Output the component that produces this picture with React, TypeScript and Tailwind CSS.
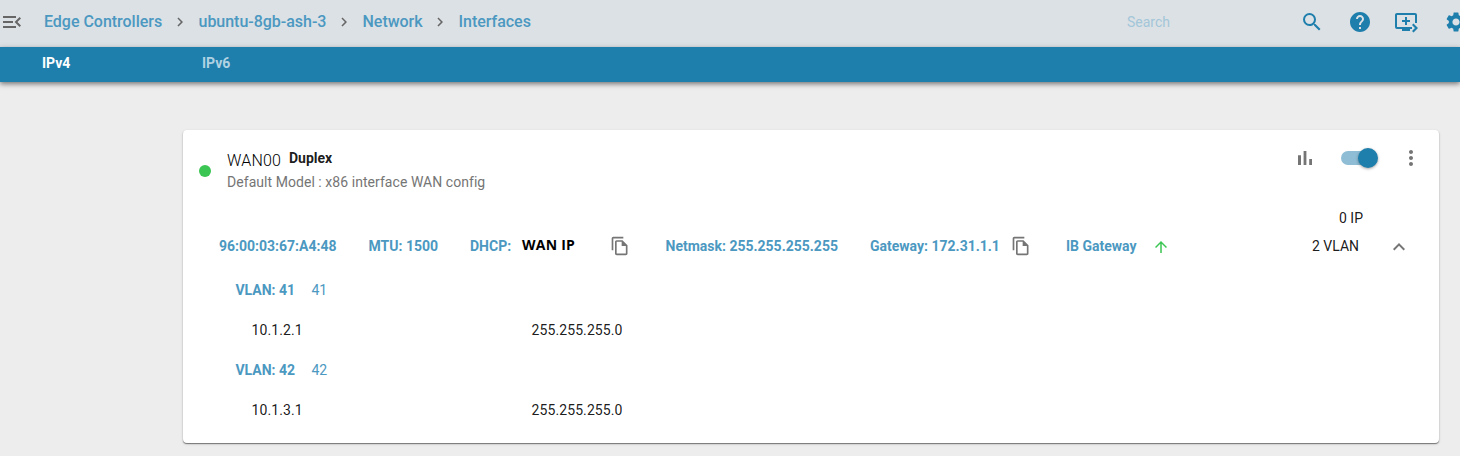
import { Fragment } from "react";
import {
  MdArrowUpward,
  MdChevronRight,
  MdExpandLess,
  MdHelp,
  MdMenuOpen,
  MdMoreVert,
  MdOutlineFileCopy,
  MdQueuePlayNext,
  MdSearch,
  MdSettings,
} from "react-icons/md";

const crumbs = [
  { label: "Edge Controllers", width: "w-[154.5px]" },
  { label: "ubuntu-8gb-ash-3", width: "w-[164px]" },
  { label: "Network", width: "w-[96px]" },
  { label: "Interfaces", width: "w-[80px]" },
];

const vlans = [
  { id: "41", ip: "10.1.2.1", mask: "255.255.255.0" },
  { id: "42", ip: "10.1.3.1", mask: "255.255.255.0" },
];

function BarsIcon() {
  return (
    <svg viewBox="0 0 24 24" className="mr-6 size-6" fill="currentColor">
      <path d="M5 9.2h3V19H5zM10.6 5h2.8v14h-2.8zm5.6 8H19v6h-2.8z" />
    </svg>
  );
}

function Header() {
  return (
    <header className="flex h-[47px] items-center bg-[#dce1e5] pb-[3px]">
      <MdMenuOpen className="size-6 shrink-0 text-[#666]" />
      <nav className="ml-5 flex w-[1083px] shrink-0 items-center text-[16px] leading-6 font-medium text-[#4b98c1]">
        {crumbs.map((c, i) => (
          <Fragment key={c.label}>
            {i > 0 && <MdChevronRight className="-ml-[28px] mr-[10px] size-[18px] shrink-0 text-[#666]" />}
            <a className={`shrink-0 tracking-[-0.02px] ${c.width}`}>{c.label}</a>
          </Fragment>
        ))}
      </nav>
      <span className="w-[173px] shrink-0 pb-px text-sm text-[#a3c6d9]">Search</span>
      <div className="flex shrink-0 items-center gap-6 text-[#1e7eac]">
        <MdSearch className="size-6" />
        <MdHelp className="size-6" />
        <MdQueuePlayNext className="-ml-0.5 size-6" />
        <MdSettings className="ml-0.5 size-6" />
      </div>
    </header>
  );
}

function Switch() {
  return (
    <button className="relative h-[14px] w-9 rounded-full bg-[#8ebdd5]">
      <span className="absolute -top-[3px] left-[17px] size-5 rounded-full bg-[#1e7eac] shadow-[0_1px_3px_rgba(0,0,0,0.35)]" />
    </button>
  );
}

export default function App() {
  return (
    <div className="h-[456px] w-[1460px] overflow-hidden bg-[#ededed] font-[Roboto,sans-serif] text-sm leading-5">
      <Header />
      <div className="flex h-[35px] bg-[#1e7eac] pt-[6px] pl-[42px] font-bold text-white shadow-[0_2px_5px_rgba(0,0,0,0.5)]">
        <span className="w-40">IPv4</span>
        <span className="text-[#b0d2e2]">IPv6</span>
      </div>
      <main className="mt-12 ml-[183px] h-[313px] w-[1256px] rounded bg-white shadow-[0_1px_1px_rgba(0,0,0,0.45),0_1px_3px_rgba(0,0,0,0.15)]">
        <div className="flex h-[78px] pt-4">
          <span className="mt-[19px] ml-4 size-3 shrink-0 rounded-full bg-[#3bc552]" />
          <div className="ml-4 w-[1066px] shrink-0">
            <div className="flex h-[26px]">
              <span className="w-[62px] pt-[3px] text-[16px] leading-6 font-light tracking-[0.2px] text-black">WAN00</span>
              <span className="pt-[2px] font-bold text-black/90">Duplex</span>
            </div>
            <p className="tracking-[0.05px] text-[#757575]">Default Model : x86 interface WAN config</p>
          </div>
          <div className="flex h-6 items-center text-[#757575]">
            <BarsIcon />
            <Switch />
            <MdMoreVert className="ml-[22px] size-6" />
          </div>
        </div>
        <div className="flex h-[18px] justify-end pr-[76px] text-black/90">0 IP</div>
        <div className="flex h-10 items-center pl-9 font-bold text-[#4b98c1]">
          <span className="w-[149.5px]">96:00:03:67:A4:48</span>
          <span className="w-[101.5px]">MTU: 1500</span>
          <span className="w-[52px]">DHCP:</span>
          <span className="w-[88px] pb-0.5 font-[Open_Sans,sans-serif] font-bold tracking-[0.25px] text-black">WAN IP</span>
          <MdOutlineFileCopy className="size-5 text-[#757575]" />
          <span className="ml-[35.5px] w-[204.5px]">Netmask: 255.255.255.255</span>
          <span className="w-[141px]">Gateway: 172.31.1.1</span>
          <MdOutlineFileCopy className="size-5 text-[#757575]" />
          <span className="ml-[35px] w-[86px]">IB Gateway</span>
          <MdArrowUpward className="mt-0.5 size-[18px] text-[#3bc552]" />
          <span className="ml-[142px] w-[75px] font-normal text-black/90">2 VLAN</span>
          <MdExpandLess className="mt-0.5 size-6 text-[#757575]" />
        </div>
        <div className="pt-1">
          {vlans.map((v) => (
            <section key={v.id}>
              <div className="flex h-10 items-center pl-[52.4px] text-[#4b98c1]">
                <span className="w-[76px] font-bold">VLAN: {v.id}</span>
                <span>{v.id}</span>
              </div>
              <div className="flex h-10 items-center pl-[68.5px] tracking-[0.1px] text-black/90">
                <span className="w-[280px]">{v.ip}</span>
                <span>{v.mask}</span>
              </div>
            </section>
          ))}
        </div>
      </main>
    </div>
  );
}
